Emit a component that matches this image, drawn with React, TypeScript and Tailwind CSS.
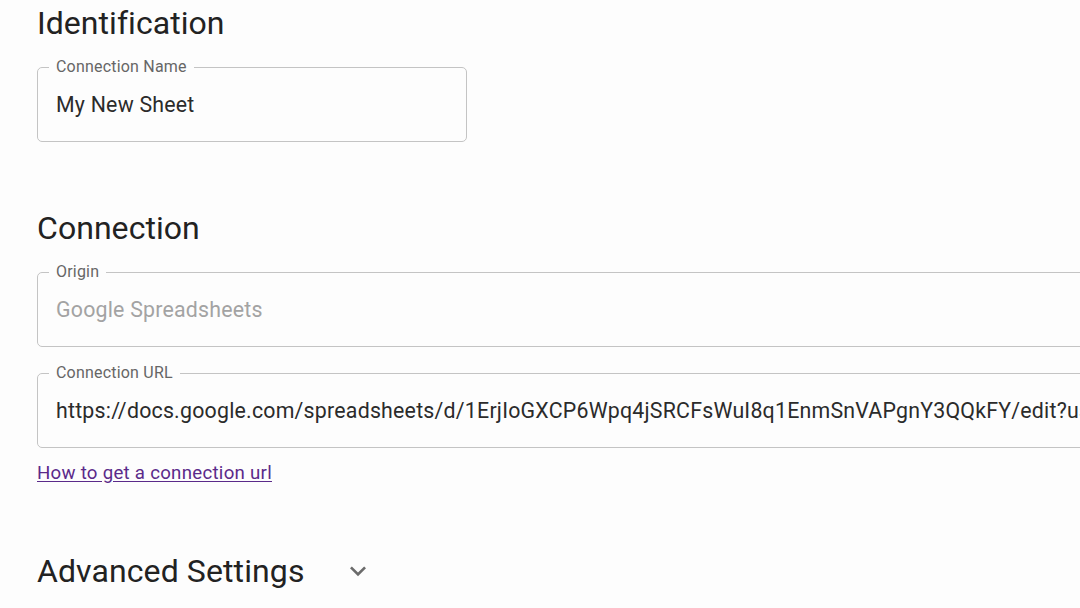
import React from "react";

const font = { fontFamily: "Roboto, 'Liberation Sans', sans-serif" };

function Field({
  label,
  value,
  disabled,
  className,
}: {
  label: string;
  value: string;
  disabled?: boolean;
  className?: string;
}) {
  return (
    <fieldset
      className={
        "min-w-0 border border-[#c4c4c4] rounded-[5px] px-[10px] m-0 overflow-hidden " +
        (className ?? "")
      }
    >
      <legend className="ml-[1px] px-[7px] text-[16px] leading-[16px] tracking-[0.2px] text-[#666666]">
        {label}
      </legend>
      <div
        className={
          "pt-[17px] pb-[23px] pl-[8px] text-[21.33px] leading-[26px] tracking-[0.22px] whitespace-nowrap " +
          (disabled ? "text-[#a3a3a3]" : "text-[#2b2b2b]")
        }
      >
        {value}
      </div>
    </fieldset>
  );
}

export default function App() {
  return (
    <div
      className="w-[1080px] h-[608px] overflow-hidden bg-[#fdfdfd]"
      style={font}
    >
      <div className="pl-[37px] pt-[3px] w-[1300px]">
        <h2 className="text-[32px] leading-[40px] text-[#222222] font-normal tracking-[0.05px]">
          Identification
        </h2>
        <Field
          label="Connection Name"
          value="My New Sheet"
          className="mt-[16px] w-[430px]"
        />

        <h2 className="mt-[66px] text-[32px] leading-[40px] text-[#222222] font-normal tracking-[0.05px]">
          Connection
        </h2>
        <Field
          label="Origin"
          value="Google Spreadsheets"
          disabled
          className="mt-[16px] w-[1200px]"
        />
        <Field
          label="Connection URL"
          value="https://docs.google.com/spreadsheets/d/1ErjIoGXCP6Wpq4jSRCFsWuI8q1EnmSnVAPgnY3QQkFY/edit?usp=sharing"
          className="mt-[18px] w-[1200px]"
        />
        <div className="mt-[13px] leading-[24px]">
          <a
            href="#"
            className="text-[18.67px] tracking-[0.27px] text-[#5b2a8a] underline underline-offset-[2px]"
          >
            How to get a connection url
          </a>
        </div>

        <div className="mt-[65px] flex items-center">
          <h2 className="text-[32px] leading-[40px] text-[#222222] font-normal tracking-[0.1px]">
            Advanced Settings
          </h2>
          <button className="ml-[37px] w-[32px] h-[32px] flex items-center justify-center text-[#6b6b6b]">
            <svg viewBox="0 0 24 24" width="32" height="32" fill="currentColor">
              <path d="M16.59 8.59 12 13.17 7.41 8.59 6 10l6 6 6-6z" />
            </svg>
          </button>
        </div>
      </div>
    </div>
  );
}
